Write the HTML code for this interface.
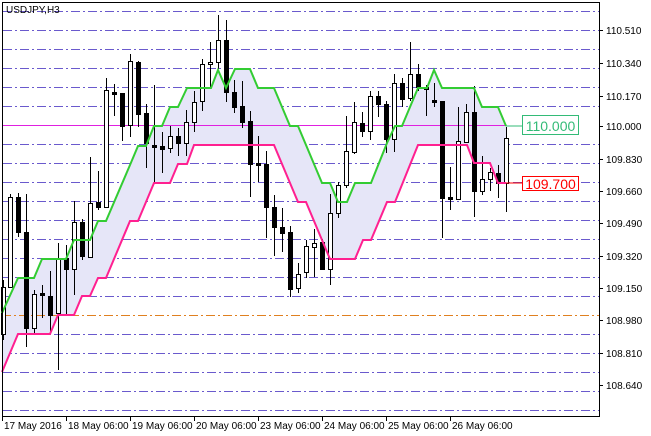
<!DOCTYPE html>
<html><head><meta charset="utf-8"><style>
html,body{margin:0;padding:0;background:#fff;}
svg{display:block;font-family:"Liberation Sans",sans-serif;}
</style></head><body>
<svg id="s" width="651" height="436" viewBox="0 0 651 436" xmlns="http://www.w3.org/2000/svg">
<rect x="0" y="0" width="651" height="436" fill="#fff"/>
<g id="grid"></g>
<polygon id="band" fill="#e6e6f8" stroke="none"/>
<line x1="2" y1="125.5" x2="506" y2="125.5" stroke="#e020e0" stroke-width="1"/>
<line x1="2" y1="315.5" x2="599" y2="315.5" stroke="#e08020" stroke-width="1" stroke-dasharray="9,3,2,3"/>
<g id="candles"></g>
<polyline id="up" fill="none" stroke="#33cc33" stroke-width="2"/>
<polyline id="lo" fill="none" stroke="#ff2090" stroke-width="2"/>
<line x1="506" y1="126" x2="522" y2="126" stroke="#33bb77" stroke-width="1"/>
<line x1="506" y1="183" x2="522" y2="183" stroke="#ff0000" stroke-width="1"/>
<rect x="522.5" y="115.5" width="56" height="19" fill="#fff" stroke="#33bb77"/>
<text x="550.5" y="131" font-size="14" fill="#33bb77" text-anchor="middle">110.000</text>
<rect x="522.5" y="176.5" width="56" height="14" fill="#fff" stroke="#ff0000"/>
<text x="550.5" y="189" font-size="14" fill="#ff0000" text-anchor="middle">109.700</text>
<path d="M2.5 2.5 H599.5 V416.5 H2.5 Z" fill="none" stroke="#000"/>
<text x="6" y="13" font-size="10" fill="#000">USDJPY,H3</text>
<g id="axis" font-size="10" fill="#000"></g>
</svg>
<script>
var NS="http://www.w3.org/2000/svg";
function el(p,t,a,txt){var e=document.createElementNS(NS,t);for(var k in a)e.setAttribute(k,a[k]);if(txt)e.textContent=txt;document.getElementById(p).appendChild(e);return e;}
for(var k=0;k<22;k++){var y=11+19*k;if(y==125||y==315)continue;
el("grid","line",{x1:3,x2:599,y1:y+0.5,y2:y+0.5,stroke:"#6a5acd","stroke-width":1,"stroke-dasharray":"9,3,2,3"});}
var up=[[2,313],[18,278],[34,278],[42,259],[66,259],[74,240],[90,240],[98,221],[106,221],[130,165],[138,146],[146,146],[154,126],[162,126],[170,107],[178,107],[187,88],[211,88],[218,70],[226,88],[235,69],[250,69],[258,88],[274,88],[290,126],[298,126],[322,183],[330,183],[338,202],[347,202],[355,183],[371,183],[387,143],[395,126],[402,126],[418,88],[427,88],[434,70],[442,88],[474,88],[482,107],[498,107],[506,126]];
var lo=[[2,372],[18,334],[50,334],[58,315],[74,315],[82,296],[90,296],[98,278],[106,278],[130,221],[138,221],[154,183],[170,183],[178,164],[187,164],[194,145],[274,145],[298,202],[306,202],[330,259],[355,259],[363,240],[371,240],[387,202],[395,202],[418,145],[467,145],[474,163],[490,163],[498,183],[506,183]];
function pts(a){return a.map(function(p){return p[0]+","+p[1]}).join(" ");}
document.getElementById("up").setAttribute("points",pts(up));
document.getElementById("lo").setAttribute("points",pts(lo));
document.getElementById("band").setAttribute("points",pts(up)+" "+pts(lo.slice().reverse()));
// x, bodyTop, bodyBot, wickTop, wickBot, white
var c=[[3,287,334,280,340,1],[10,197,287,194,287,1],[18,197,232,193,237,0],[26,232,328,194,347,0],[34,294,328,290,333,1],[42,293,295,285,318,0],[50,296,315,271,333,0],[58,258,313,243,370,1],[66,258,269,245,315,0],[74,222,269,201,295,1],[82,222,256,219,260,0],[90,203,257,157,258,1],[98,202,207,171,210,0],[106,90,207,78,207,1],[114,92,94,84,116,0],[122,93,126,93,141,0],
[130,61,125,54,137,1],[138,62,114,61,127,0],[146,113,143,104,168,0],[154,145,147,85,183,0],[162,146,149,132,173,0],[170,136,148,126,153,1],[178,136,143,128,156,0],[186,122,143,110,156,1],[194,102,122,91,132,1],[202,64,101,59,111,1],[210,62,64,42,87,1],[218,40,62,15,69,1],[226,40,92,20,102,0],[234,92,107,80,113,0],[242,106,122,81,128,0],[250,121,164,111,197,0],
[258,163,165,136,182,0],[266,164,207,151,238,0],[274,207,227,195,256,0],[282,227,233,208,252,0],[290,232,289,226,297,0],[298,274,288,263,293,1],[306,246,272,240,278,1],[314,243,247,229,277,1],[322,242,269,239,270,0],[330,213,269,194,285,1],[338,185,213,182,218,1],[346,151,185,116,188,1],[354,122,152,102,154,1],[362,123,131,112,137,0],[370,96,131,91,140,1],[378,96,104,91,117,0],
[386,104,139,101,153,0],[394,83,139,74,152,1],[402,83,99,78,107,0],[410,74,98,42,101,1],[418,74,87,64,91,0],[426,87,89,85,116,0],[434,100,102,83,107,0],[442,101,198,101,238,0],[450,197,199,167,210,0],[458,141,199,107,199,1],[466,112,142,104,142,1],[474,112,191,86,217,0],[482,179,191,156,195,1],[490,172,179,168,191,1],[498,173,183,165,198,0],[506,138,183,127,212,1]];
c.forEach(function(d){var x=d[0];
el("candles","line",{x1:x+0.5,x2:x+0.5,y1:d[3],y2:d[4],stroke:"#000","stroke-width":1});
var h=Math.max(1,d[2]-d[1]);
el("candles","rect",{x:x-1.5,y:d[1]+0.5,width:4,height:h,fill:d[5]?"#fff":"#000",stroke:"#000","stroke-width":1});});
var lab=[["110.510",30],["110.340",63],["110.170",96],["110.000",126],["109.830",159],["109.660",191],["109.490",223],["109.320",256],["109.150",288],["108.980",320],["108.810",353],["108.640",385]];
lab.forEach(function(l){el("axis","line",{x1:599,x2:603,y1:l[1]+0.5,y2:l[1]+0.5,stroke:"#000"});el("axis","text",{x:606,y:l[1]+4},l[0]);});
var dl=["17 May 2016","18 May 06:00","19 May 06:00","20 May 06:00","23 May 06:00","24 May 06:00","25 May 06:00","26 May 06:00"];
dl.forEach(function(t,i){var x=2+64*i;el("axis","line",{x1:x+0.5,x2:x+0.5,y1:416,y2:421,stroke:"#000"});el("axis","text",{x:x+2,y:429},t);});
</script>
</body></html>
